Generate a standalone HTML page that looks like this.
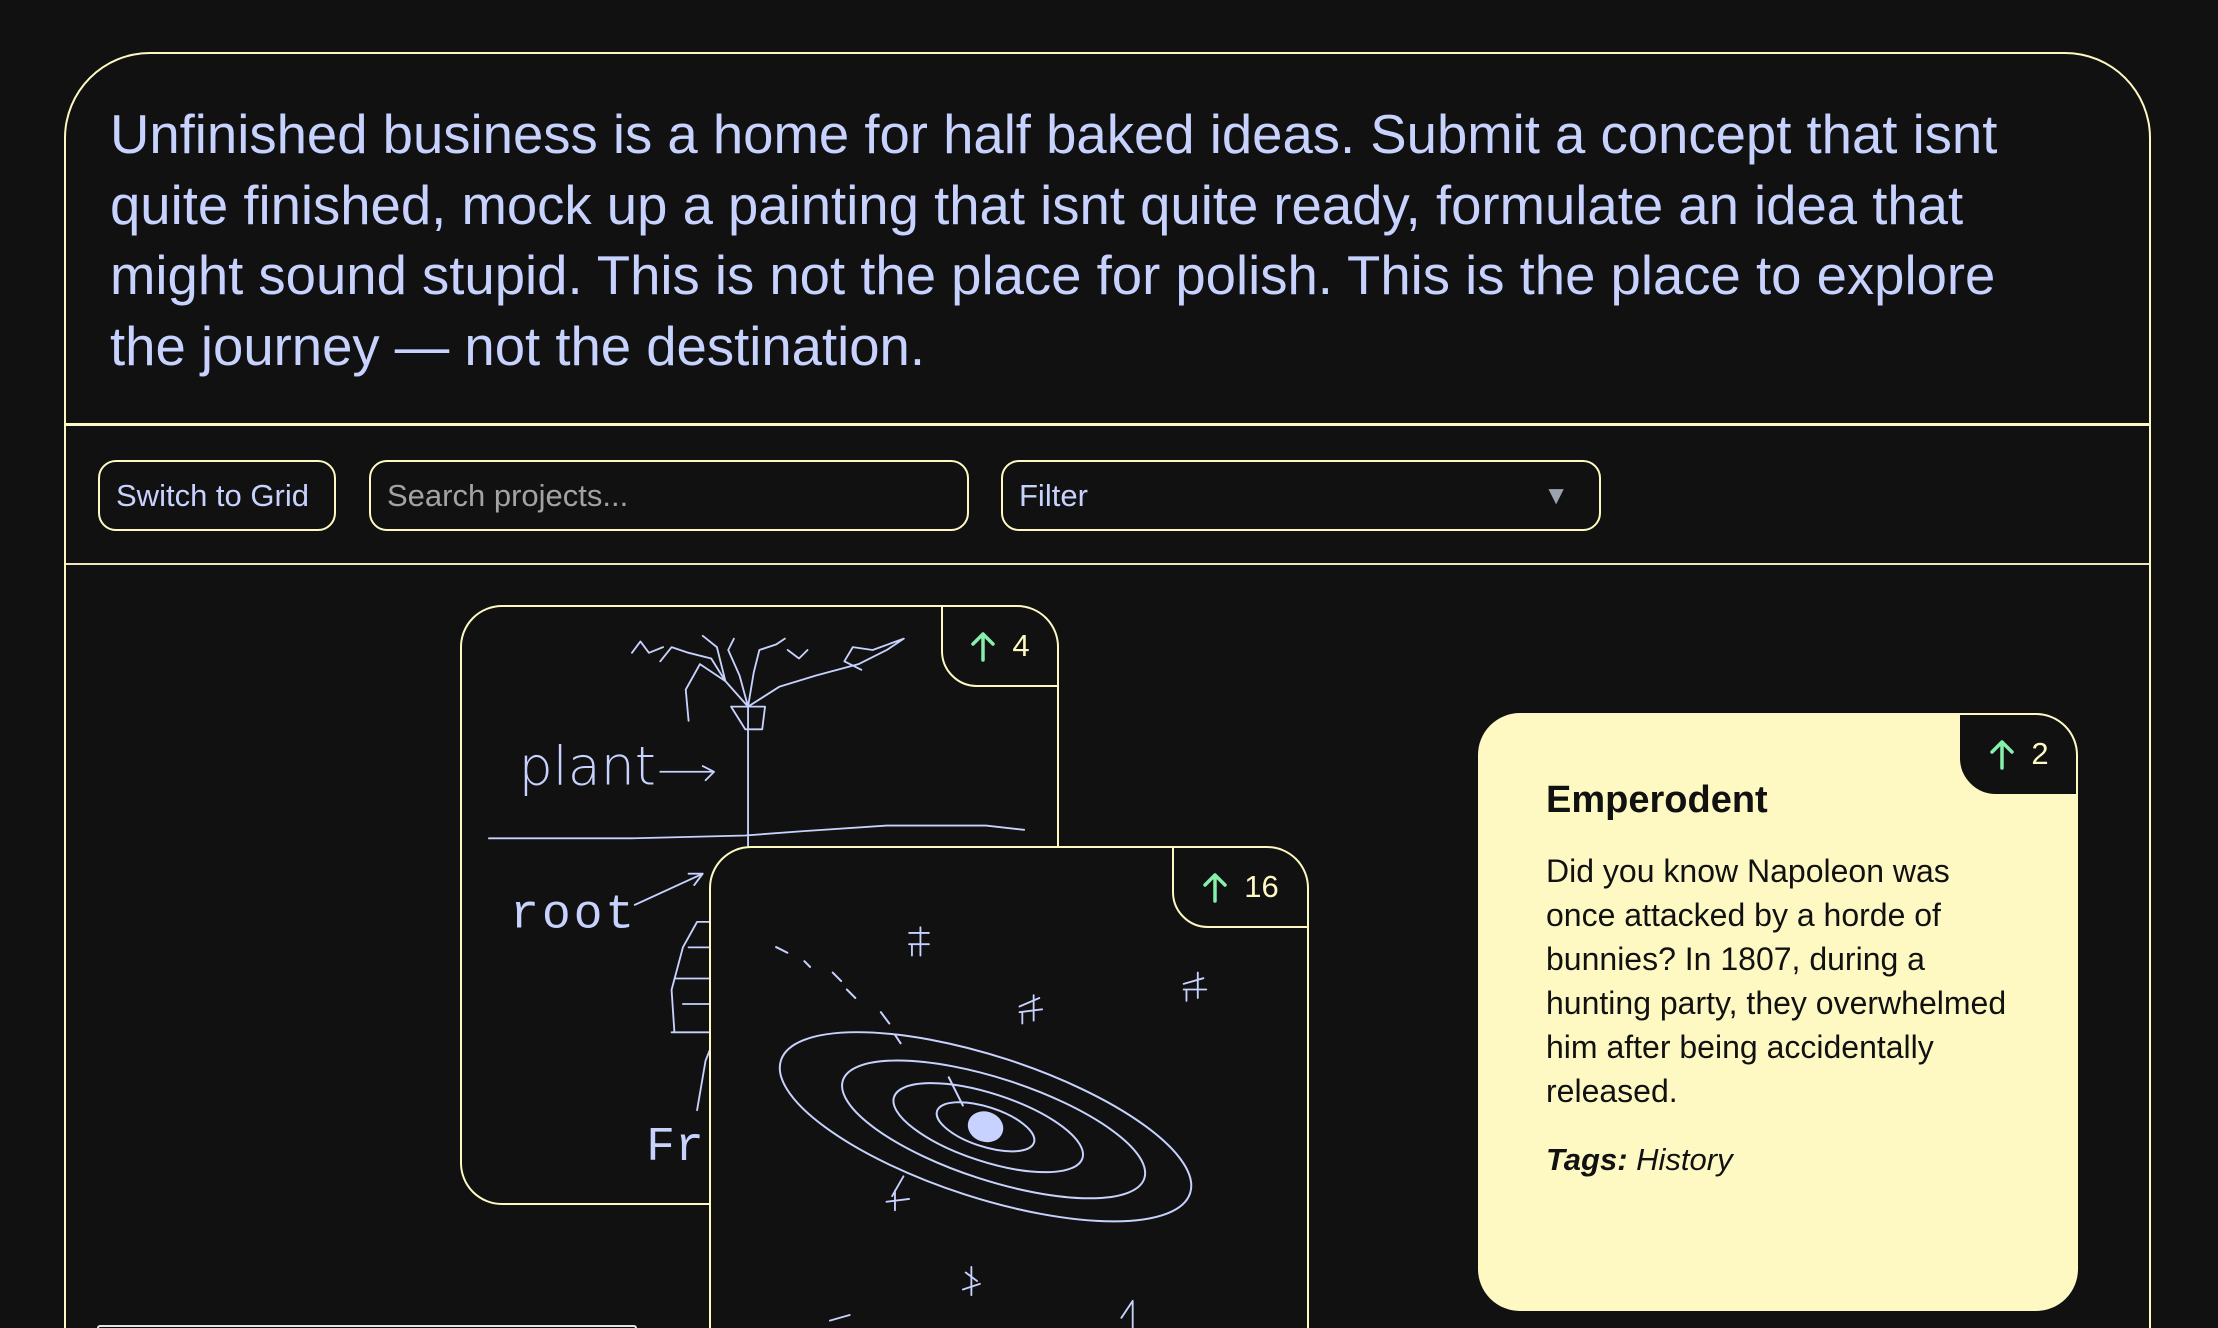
<!DOCTYPE html>
<html><head><meta charset="utf-8">
<style>
*{box-sizing:border-box;margin:0;padding:0}
html,body{width:2218px;height:1328px;overflow:hidden;background:#111111;font-family:"Liberation Sans",Helvetica,Arial,sans-serif;position:relative}
.main{position:absolute;left:64px;top:52px;width:2087px;height:1276px;border:2px solid #fef9c3;border-bottom:none;border-radius:86px 86px 0 0}
.intro{position:absolute;left:44px;top:46px;width:1960px;color:#c7d2fe;font-size:54.5px;line-height:70.5px}
.hr{position:absolute;left:0;right:0;height:3px;background:#fef9c3}
.ctl{position:absolute;top:460px;height:71px;border:2px solid #fef9c3;border-radius:18px;font-size:31px;line-height:67px;padding-left:16px;color:#c7d2fe}
.card{position:absolute;border:2px solid #fef9c3;border-radius:42px;background:#111;overflow:hidden}
.vote{position:absolute;right:-2px;top:-2px;border:2px solid #fef9c3;border-radius:0 42px 0 36px;background:#111;color:#fef9c3;font-size:31px;display:flex;align-items:center;justify-content:center;gap:16px}
.vote svg{width:26px;height:32px}
</style></head><body>
<div class="main">
  <div class="intro">Unfinished business is a home for half baked ideas. Submit a concept that isnt quite finished, mock up a painting that isnt quite ready, formulate an idea that might sound stupid. This is not the place for polish. This is the place to explore the journey — not the destination.</div>
  <div class="hr" style="top:369px"></div>
  <div class="hr" style="top:509px;height:2px;background:#eee9b8"></div>
</div>
<div class="ctl" style="left:98px;width:238px;padding-left:16px">Switch to Grid</div>
<div class="ctl" style="left:369px;width:600px;color:#a3a3a3">Search projects...</div>
<div class="ctl" style="left:1001px;width:600px">Filter<span style="position:absolute;right:30px;top:0;color:#9ca3af;font-size:26px">▼</span></div>

<div class="card" style="left:460px;top:605px;width:599px;height:600px">
<svg width="599" height="600" viewBox="0 0 423 423" style="position:absolute;left:0;top:0" fill="none" stroke="#c7d2fe" stroke-width="1.3" stroke-linecap="round" stroke-linejoin="round">
<path d="M19 163 L120 163 L200 161 L240 158 L300 154 L370 154 L397 157"/>
<path d="M202 70 L202 172"/>
<path d="M190 70 L214 70 L212 86 L200 86 L190 70"/>
<path d="M202 70 L186 52 L168 40 L158 58 L160 80 M186 52 L176 36 L160 32 L148 28 L140 38 M186 52 L180 28 L170 20 M202 70 L196 48 L188 30 L192 22 M202 70 L206 46 L210 30 L222 26 L228 22 M202 70 L224 56 L250 48 L280 40 L300 30 L312 22 L290 30 L276 28 L270 38 L282 44"/>
<path d="M120 32 L126 24 L132 32 L142 28 M230 30 L238 36 L244 30"/>
<path d="M140 116 L178 116 M170 112 L178 116 L172 122"/>
<path d="M122 210 L170 188 M160 188 L170 188 L164 196"/>
<path d="M150 300 L148 270 L156 240 L166 222 L176 222 M148 300 L176 300 M156 280 L176 280 M150 262 L176 262 M160 240 L176 240"/>
<path d="M166 355 L172 320 L176 310"/>
<text x="40" y="125" font-family="DejaVu Sans, sans-serif" font-size="38" font-weight="200" fill="#c7d2fe" stroke="none">plant</text>
<text x="34" y="226" font-family="Liberation Mono, monospace" font-size="34" fill="#c7d2fe" stroke="none" letter-spacing="2">root</text>
<text x="130" y="390" font-family="Liberation Mono, monospace" font-size="34" fill="#c7d2fe" stroke="none">Fr</text>
</svg>
<div class="vote" style="width:118px;height:82px"><svg viewBox="0 0 26 32"><path d="M13 30 V4 M3 14 L13 4 L23 14" stroke="#86efac" stroke-width="3.5" fill="none" stroke-linecap="round" stroke-linejoin="round"/></svg>4</div>
</div>

<div class="card" style="left:709px;top:846px;width:600px;height:482px;border-bottom:none;border-radius:42px 42px 0 0">
<svg width="600" height="480" viewBox="0 0 424 339.2" style="position:absolute;left:0;top:0" fill="none" stroke="#c7d2fe" stroke-width="1.4" stroke-linecap="round" stroke-linejoin="round">
<path d="M46 70 L54 74 M66 80 L70 84 M86 88 L92 94 M96 100 L102 106 M120 116 L126 124 M130 132 L134 138"/>
<g transform="translate(194,197) rotate(18)">
<ellipse rx="152" ry="50"/>
<ellipse rx="112" ry="36" cx="6"/>
<ellipse rx="70" ry="24" cx="2"/>
<ellipse rx="36" ry="14"/>
<ellipse rx="12" ry="10" fill="#c7d2fe"/>
</g>
<path d="M178 182 L168 162"/>
<g stroke-width="1.3">
<path d="M140 60 L154 60 M148 56 L148 76 M140 68 L154 68 M142 68 L142 76"/>
<path d="M218 112 L232 106 M228 104 L228 122 M218 116 L234 114 M220 116 L220 124"/>
<path d="M334 96 L348 92 M344 88 L344 106 M334 100 L350 100 M336 100 L336 108"/>
<path d="M128 246 L136 232 M124 250 L140 248 M130 242 L130 256"/>
<path d="M180 300 L188 306 M184 296 L184 316 M178 312 L190 308"/>
<path d="M84 334 L98 330"/>
<path d="M290 332 L298 320 L298 339"/>
</g>
</svg>
<div class="vote" style="width:137px;height:82px"><svg viewBox="0 0 26 32"><path d="M13 30 V4 M3 14 L13 4 L23 14" stroke="#86efac" stroke-width="3.5" fill="none" stroke-linecap="round" stroke-linejoin="round"/></svg>16</div>
</div>

<div class="card" style="left:1478px;top:713px;width:600px;height:598px;background:#fef9c3;border-color:#fef9c3">
<div style="position:absolute;left:66px;top:64px;font-size:38px;font-weight:bold;color:#111">Emperodent</div>
<div style="position:absolute;left:66px;top:134px;width:472px;font-size:32px;line-height:44px;color:#111">Did you know Napoleon was once attacked by a horde of bunnies? In 1807, during a hunting party, they overwhelmed him after being accidentally released.</div>
<div style="position:absolute;left:66px;top:427px;font-size:31px;font-style:italic;color:#111"><b>Tags:</b> History</div>
<div class="vote" style="width:118px;height:81px;background:#111;border-color:#111;border-radius:0 0 0 36px"><svg viewBox="0 0 26 32"><path d="M13 30 V4 M3 14 L13 4 L23 14" stroke="#86efac" stroke-width="3.5" fill="none" stroke-linecap="round" stroke-linejoin="round"/></svg>2</div>
</div>

<div class="card" style="left:97px;top:1325px;width:540px;height:3px;border-color:#e5e5e5;border-bottom:none;border-radius:20px 20px 0 0"></div>
</body></html>
